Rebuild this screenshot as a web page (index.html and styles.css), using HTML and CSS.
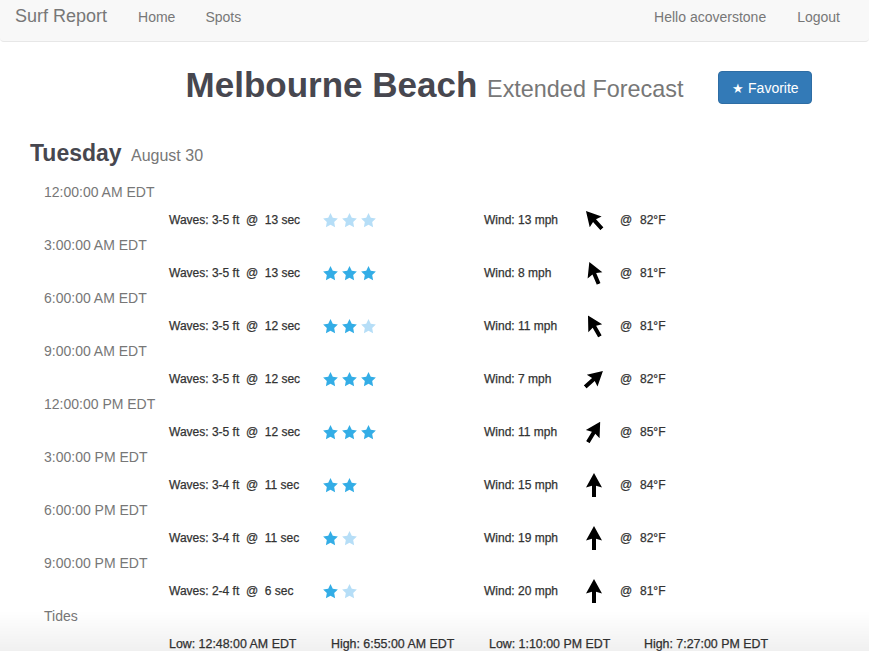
FILE: index.html
```html
<!DOCTYPE html>
<html>
<head>
<meta charset="utf-8">
<link rel="stylesheet" href="styles.css">
</head>
<body>
<svg width="0" height="0" class="defs">
  <defs>
    <path id="star" d="M12 1.5l3.2 6.6 7.2 1-5.2 5.1 1.3 7.2L12 18l-6.5 3.4 1.3-7.2L1.6 9.1l7.2-1z"/>
    <path id="arrow" d="M10 0 L18 14.5 L12 12.8 L12 24 L8 24 L8 12.8 L2 14.5 Z"/>
  </defs>
</svg>
<nav class="navbar">
  <div class="nav-left">
    <a class="brand">Surf Report</a>
    <a class="nav-link home">Home</a>
    <a class="nav-link spots">Spots</a>
  </div>
  <div class="nav-right">
    <a class="nav-link hello">Hello acoverstone</a>
    <a class="nav-link logout">Logout</a>
  </div>
</nav>

<header class="page-head">
  <h1 class="title">Melbourne Beach <small>Extended Forecast</small></h1>
  <div class="fav-cell"><button class="btn-fav"><span class="btn-star">★</span> Favorite</button></div>
</header>

<main class="forecast">
  <h3 class="day">Tuesday <small>August 30</small></h3>

  <div class="time">12:00:00 AM EDT</div>
  <div class="row">
    <span>Waves: 3-5 ft&nbsp; @&nbsp; 13 sec</span>
    <span class="stars"><svg class="star light" viewBox="0 0 24 24"><use href="#star"/></svg><svg class="star light" viewBox="0 0 24 24"><use href="#star"/></svg><svg class="star light" viewBox="0 0 24 24"><use href="#star"/></svg></span>
    <span>Wind: 13 mph</span>
    <span class="arrow-cell"><svg class="arrow" style="transform: rotate(-42deg)" viewBox="0 0 20 24"><use href="#arrow"/></svg></span>
    <span>@</span><span>82°F</span>
  </div>

  <div class="time">3:00:00 AM EDT</div>
  <div class="row">
    <span>Waves: 3-5 ft&nbsp; @&nbsp; 13 sec</span>
    <span class="stars"><svg class="star" viewBox="0 0 24 24"><use href="#star"/></svg><svg class="star" viewBox="0 0 24 24"><use href="#star"/></svg><svg class="star" viewBox="0 0 24 24"><use href="#star"/></svg></span>
    <span>Wind: 8 mph</span>
    <span class="arrow-cell"><svg class="arrow" style="transform: rotate(-23deg)" viewBox="0 0 20 24"><use href="#arrow"/></svg></span>
    <span>@</span><span>81°F</span>
  </div>

  <div class="time">6:00:00 AM EDT</div>
  <div class="row">
    <span>Waves: 3-5 ft&nbsp; @&nbsp; 12 sec</span>
    <span class="stars"><svg class="star" viewBox="0 0 24 24"><use href="#star"/></svg><svg class="star" viewBox="0 0 24 24"><use href="#star"/></svg><svg class="star light" viewBox="0 0 24 24"><use href="#star"/></svg></span>
    <span>Wind: 11 mph</span>
    <span class="arrow-cell"><svg class="arrow" style="transform: rotate(-30deg)" viewBox="0 0 20 24"><use href="#arrow"/></svg></span>
    <span>@</span><span>81°F</span>
  </div>

  <div class="time">9:00:00 AM EDT</div>
  <div class="row">
    <span>Waves: 3-5 ft&nbsp; @&nbsp; 12 sec</span>
    <span class="stars"><svg class="star" viewBox="0 0 24 24"><use href="#star"/></svg><svg class="star" viewBox="0 0 24 24"><use href="#star"/></svg><svg class="star" viewBox="0 0 24 24"><use href="#star"/></svg></span>
    <span>Wind: 7 mph</span>
    <span class="arrow-cell"><svg class="arrow" style="transform: rotate(48deg)" viewBox="0 0 20 24"><use href="#arrow"/></svg></span>
    <span>@</span><span>82°F</span>
  </div>

  <div class="time">12:00:00 PM EDT</div>
  <div class="row">
    <span>Waves: 3-5 ft&nbsp; @&nbsp; 12 sec</span>
    <span class="stars"><svg class="star" viewBox="0 0 24 24"><use href="#star"/></svg><svg class="star" viewBox="0 0 24 24"><use href="#star"/></svg><svg class="star" viewBox="0 0 24 24"><use href="#star"/></svg></span>
    <span>Wind: 11 mph</span>
    <span class="arrow-cell"><svg class="arrow" style="transform: rotate(31deg)" viewBox="0 0 20 24"><use href="#arrow"/></svg></span>
    <span>@</span><span>85°F</span>
  </div>

  <div class="time">3:00:00 PM EDT</div>
  <div class="row">
    <span>Waves: 3-4 ft&nbsp; @&nbsp; 11 sec</span>
    <span class="stars"><svg class="star" viewBox="0 0 24 24"><use href="#star"/></svg><svg class="star" viewBox="0 0 24 24"><use href="#star"/></svg></span>
    <span>Wind: 15 mph</span>
    <span class="arrow-cell"><svg class="arrow" viewBox="0 0 20 24"><use href="#arrow"/></svg></span>
    <span>@</span><span>84°F</span>
  </div>

  <div class="time">6:00:00 PM EDT</div>
  <div class="row">
    <span>Waves: 3-4 ft&nbsp; @&nbsp; 11 sec</span>
    <span class="stars"><svg class="star" viewBox="0 0 24 24"><use href="#star"/></svg><svg class="star light" viewBox="0 0 24 24"><use href="#star"/></svg></span>
    <span>Wind: 19 mph</span>
    <span class="arrow-cell"><svg class="arrow" viewBox="0 0 20 24"><use href="#arrow"/></svg></span>
    <span>@</span><span>82°F</span>
  </div>

  <div class="time">9:00:00 PM EDT</div>
  <div class="row">
    <span>Waves: 2-4 ft&nbsp; @&nbsp; 6 sec</span>
    <span class="stars"><svg class="star" viewBox="0 0 24 24"><use href="#star"/></svg><svg class="star light" viewBox="0 0 24 24"><use href="#star"/></svg></span>
    <span>Wind: 20 mph</span>
    <span class="arrow-cell"><svg class="arrow" viewBox="0 0 20 24"><use href="#arrow"/></svg></span>
    <span>@</span><span>81°F</span>
  </div>

  <div class="time">Tides</div>
  <div class="tides">
    <span>Low: 12:48:00 AM EDT</span>
    <span>High: 6:55:00 AM EDT</span>
    <span>Low: 1:10:00 PM EDT</span>
    <span>High: 7:27:00 PM EDT</span>
  </div>
</main>
<div class="fade"></div>
</body>
</html>
```

FILE: styles.css
```css
html, body {
  margin: 0;
  padding: 0;
  background: #fff;
  font-family: "Liberation Sans", Arial, sans-serif;
  color: #333;
  overflow: hidden;
}

.defs { position: absolute; width: 0; height: 0; }

.navbar {
  height: 33px;
  padding-bottom: 8px;
  background: #f8f8f8;
  border-bottom: 1px solid #e7e7e7;
  border-radius: 0 0 4px 4px;
  display: flex;
  justify-content: space-between;
  align-items: center;
  color: #777;
}

.nav-left, .nav-right {
  display: flex;
  align-items: center;
}

.brand {
  font-size: 18px;
  margin-left: 15px;
  color: #777;
}

.nav-link {
  font-size: 14px;
  color: #777;
}

.home { margin-left: 31px; }
.spots { margin-left: 30px; }
.hello { margin-right: 0; }
.logout { margin-left: 31px; margin-right: 29px; }

.page-head {
  display: grid;
  grid-template-columns: 1fr auto 1fr;
  margin-top: 25px;
  align-items: start;
}

.title {
  grid-column: 2;
  margin: 0;
  font-size: 35px;
  line-height: 35px;
  font-weight: bold;
  color: #47474f;
  white-space: nowrap;
}

.title small {
  font-size: 23.4px;
  font-weight: normal;
  color: #777;
}

.fav-cell {
  grid-column: 3;
  padding-left: 35px;
}

.btn-fav {
  margin-top: 4px;
  height: 33px;
  width: 94px;
  background: #337ab7;
  border: 1px solid #2e6da4;
  border-radius: 4px;
  color: #fff;
  font-family: "Liberation Sans", Arial, sans-serif;
  font-size: 14px;
  padding: 0;
}

.btn-star { font-size: 13px; }

.forecast {
  padding-left: 30px;
}

.day {
  margin: 33px 0 13px 0;
  font-size: 23px;
  line-height: 26px;
  font-weight: bold;
  color: #47474f;
}

.day small {
  font-size: 16px;
  font-weight: normal;
  color: #777;
  margin-left: 3px;
}

.time {
  height: 20px;
  line-height: 20px;
  font-size: 14px;
  color: #777;
  padding-left: 14px;
}

.row {
  height: 30px;
  padding-top: 3px;
  display: grid;
  grid-template-columns: 153px 162px 100px 36px 20px auto;
  align-items: center;
  padding-left: 139px;
  font-size: 12px;
  color: #333;
  -webkit-text-stroke: 0.25px #333;
}

.stars {
  display: flex;
  gap: 2px;
  height: 17px;
}

.star {
  width: 17px;
  height: 17px;
  fill: #33ade6;
}

.star.light { fill: #b6def7; }

.arrow-cell {
  display: flex;
  height: 24px;
}

.arrow {
  width: 20px;
  height: 24px;
  fill: #000;
}

.tides {
  height: 30px;
  padding-top: 3px;
  display: grid;
  grid-template-columns: 162px 158px 155px auto;
  align-items: center;
  padding-left: 139px;
  font-size: 12.4px;
  color: #333;
  -webkit-text-stroke: 0.25px #333;
}

.fade {
  position: fixed;
  left: 0;
  right: 0;
  bottom: 0;
  height: 40px;
  pointer-events: none;
  background: linear-gradient(to bottom, rgba(0,0,0,0), rgba(0,0,0,0.06));
}
```
